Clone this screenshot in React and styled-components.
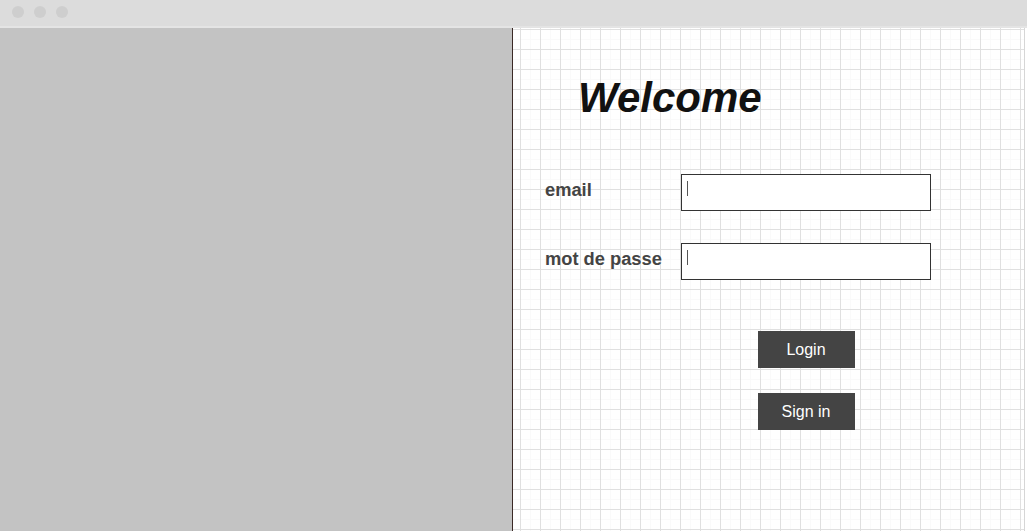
import styled, { createGlobalStyle } from 'styled-components';

const GlobalStyle = createGlobalStyle`
  html, body, #root {
    margin: 0;
    padding: 0;
    height: 100%;
  }
  body {
    font-family: "Liberation Sans", Arial, sans-serif;
    background: #ffffff;
  }
`;

const App = () => {
  return (
    <>
      <GlobalStyle />
      <Window>
        <TitleBar>
          <Dot />
          <Dot />
          <Dot />
        </TitleBar>
        <Body>
          <SidePanel />
          <FormPanel>
            <Title>Welcome</Title>
            <FormGrid>
              <Label>email</Label>
              <Field>
                <Caret />
              </Field>
              <Label>mot de passe</Label>
              <Field>
                <Caret />
              </Field>
            </FormGrid>
            <Actions>
              <ActionButton type="button">Login</ActionButton>
              <ActionButton type="button">Sign in</ActionButton>
            </Actions>
          </FormPanel>
        </Body>
      </Window>
    </>
  );
};

const Window = styled.div`
  display: flex;
  flex-direction: column;
  height: 100vh;
  width: 100%;
  overflow: hidden;
`;

const TitleBar = styled.div`
  display: flex;
  align-items: center;
  gap: 10px;
  height: 26px;
  padding-left: 12px;
  background-color: #dcdcdc;
  border-bottom: 2px solid #e4e4e4;
  flex-shrink: 0;
`;

const Dot = styled.span`
  width: 12px;
  height: 12px;
  border-radius: 50%;
  background-color: #cecece;
  margin-top: -2px;
`;

const Body = styled.div`
  display: flex;
  flex: 1;
  min-height: 0;
`;

const SidePanel = styled.div`
  width: 512px;
  flex-shrink: 0;
  background-color: #c3c3c3;
`;

const FormPanel = styled.div`
  width: 511px;
  flex-shrink: 0;
  display: flex;
  flex-direction: column;
  border-left: 1px solid #3b2a26;
  border-right: 1px solid #d6d6d6;
  background-color: #ffffff;
  background-image:
    linear-gradient(#e0e0e0 1px, transparent 1px),
    linear-gradient(90deg, #e0e0e0 1px, transparent 1px),
    linear-gradient(#fafafa 1px, transparent 1px),
    linear-gradient(90deg, #fafafa 1px, transparent 1px);
  background-size: 20px 20px, 20px 20px, 10px 10px, 10px 10px;
  background-position: 7px 1px, 7px 1px, 7px 1px, 7px 1px;
`;

const Title = styled.h1`
  margin: 46px 0 0 65px;
  font-size: 42px;
  line-height: 48px;
  font-style: italic;
  font-weight: 700;
  color: #111111;
`;

const FormGrid = styled.div`
  display: grid;
  grid-template-columns: 136px 250px;
  row-gap: 32px;
  margin: 52px 0 0 32px;
`;

const Label = styled.div`
  display: flex;
  align-items: center;
  padding-bottom: 5px;
  font-size: 18.3px;
  font-weight: 700;
  color: #444444;
`;

const Field = styled.div`
  display: flex;
  align-items: flex-start;
  box-sizing: border-box;
  height: 37px;
  padding: 6px 0 0 5px;
  border: 1px solid #333333;
  background-color: #ffffff;
`;

const Caret = styled.span`
  width: 1px;
  height: 15px;
  background-color: #555555;
`;

const Actions = styled.div`
  display: flex;
  flex-direction: column;
  align-items: center;
  gap: 25px;
  width: 250px;
  margin: 51px 0 0 168px;
`;

const ActionButton = styled.button`
  width: 97px;
  height: 37px;
  padding: 0;
  border: none;
  background-color: #444444;
  color: #ffffff;
  font-family: "Liberation Sans", Arial, sans-serif;
  font-size: 16px;
  cursor: pointer;
`;

export default App;
